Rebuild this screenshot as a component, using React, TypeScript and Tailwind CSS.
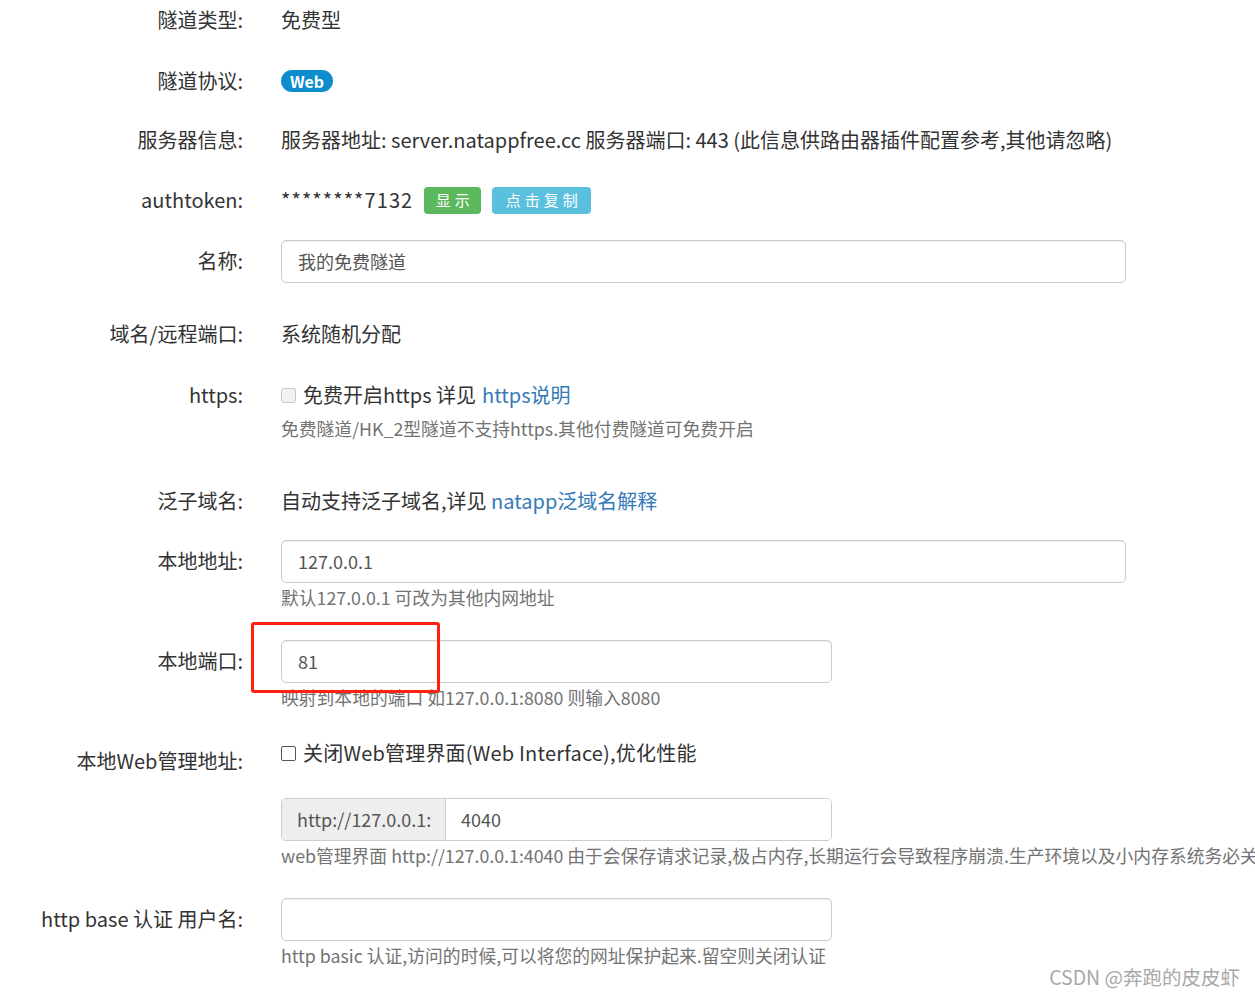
import React from "react";

const FONT = { fontFamily: '"Noto Sans CJK SC", "Noto Sans", sans-serif' };

function Label({ children, pt = "" }: { children: React.ReactNode; pt?: string }) {
  return (
    <div className={`w-[243px] shrink-0 text-right text-[20px] leading-[42px] text-[#333] ${pt}`}>
      {children}
    </div>
  );
}

function Help({ children }: { children: React.ReactNode }) {
  return <div className="text-[17.8px] leading-[28px] text-[#737373] whitespace-nowrap">{children}</div>;
}

function Input({ value, wide = true }: { value?: string; wide?: boolean }) {
  return (
    <div
      className={`${wide ? "w-[845px]" : "w-[551px]"} h-[43px] border border-[#ccc] rounded-[5px] bg-white shadow-[inset_0_1px_1px_rgba(0,0,0,0.075)] flex items-center pl-[16px] text-[18px] text-[#555]`}
    >
      {value}
    </div>
  );
}

export default function App() {
  return (
    <div style={FONT} className="relative w-[1255px] h-[996px] overflow-hidden bg-white text-[#333]">
      <div className="flex flex-col">
        {/* 隧道类型 */}
        <div className="flex h-[61px] -mt-[1px]">
          <Label>隧道类型:</Label>
          <div className="ml-[38px] text-[20px] leading-[42px]">免费型</div>
        </div>
        {/* 隧道协议 */}
        <div className="flex h-[59px]">
          <Label>隧道协议:</Label>
          <div className="ml-[38px] h-[42px] flex items-center">
            <span className="inline-flex items-center justify-center h-[22px] w-[52px] rounded-full bg-[#0e8dcc] text-white font-bold text-[16px] leading-none">
              Web
            </span>
          </div>
        </div>
        {/* 服务器信息 */}
        <div className="flex h-[60px]">
          <Label>服务器信息:</Label>
          <div className="ml-[38px] text-[20px] leading-[42px] whitespace-nowrap">
            服务器地址: server.natappfree.cc 服务器端口: 443 (此信息供路由器插件配置参考,其他请忽略)
          </div>
        </div>
        {/* authtoken */}
        <div className="flex h-[61px]">
          <Label>authtoken:</Label>
          <div className="ml-[38px] h-[42px] flex items-center">
            <span className="text-[20px] tracking-[1.1px]">********7132</span>
            <span className="ml-[11px] inline-flex items-center justify-center h-[27px] w-[57px] rounded-[4px] bg-[#5cb85c] text-white text-[15px] tracking-[4px] pl-[4px]">
              显示
            </span>
            <span className="ml-[11px] inline-flex items-center justify-center h-[27px] w-[99px] rounded-[4px] bg-[#5bc0de] text-white text-[15px] tracking-[4px] pl-[4px]">
              点击复制
            </span>
          </div>
        </div>
        {/* 名称 */}
        <div className="flex h-[73px]">
          <Label>名称:</Label>
          <div className="ml-[38px]">
            <Input value="我的免费隧道" />
          </div>
        </div>
        {/* 域名/远程端口 */}
        <div className="flex h-[61px]">
          <Label>域名/远程端口:</Label>
          <div className="ml-[38px] text-[20px] leading-[42px]">系统随机分配</div>
        </div>
        {/* https */}
        <div className="flex h-[106px]">
          <Label>https:</Label>
          <div className="ml-[38px]">
            <div className="h-[42px] flex items-center text-[20px]">
              <span className="inline-block w-[15px] h-[15px] rounded-[3px] border border-[#c8c8c8] bg-[#f2f2f2] mr-[7px]" />
              <span>免费开启https 详见 </span>
              <span className="text-[#337ab7] ml-[6px]">https说明</span>
            </div>
            <div className="-mt-[2px]">
              <Help>免费隧道/HK_2型隧道不支持https.其他付费隧道可免费开启</Help>
            </div>
          </div>
        </div>
        {/* 泛子域名 */}
        <div className="flex h-[60px]">
          <Label>泛子域名:</Label>
          <div className="ml-[38px] text-[20px] leading-[42px]">
            自动支持泛子域名,详见 <span className="text-[#337ab7]">natapp泛域名解释</span>
          </div>
        </div>
        {/* 本地地址 */}
        <div className="flex h-[100px]">
          <Label>本地地址:</Label>
          <div className="ml-[38px]">
            <Input value="127.0.0.1" />
            <Help>默认127.0.0.1 可改为其他内网地址</Help>
          </div>
        </div>
        {/* 本地端口 */}
        <div className="flex h-[92px]">
          <Label>本地端口:</Label>
          <div className="ml-[38px]">
            <Input value="81" wide={false} />
            <Help>映射到本地的端口 如127.0.0.1:8080 则输入8080</Help>
          </div>
        </div>
        {/* 本地Web管理地址 */}
        <div className="flex h-[166px]">
          <Label pt="pt-[8px]">本地Web管理地址:</Label>
          <div className="ml-[38px]">
            <div className="h-[42px] flex items-center text-[20px] whitespace-nowrap tracking-[0.2px]">
              <span className="inline-block w-[15px] h-[15px] rounded-[2px] border border-[#555] bg-white mr-[7px]" />
              关闭Web管理界面(Web Interface),优化性能
            </div>
            <div className="mt-[24px] flex w-[551px] h-[43px] border border-[#ccc] rounded-[5px] overflow-hidden text-[18px] text-[#555]">
              <div className="w-[164px] shrink-0 bg-[#eeeeee] border-r border-[#ccc] flex items-center pl-[15px]">
                http://127.0.0.1:
              </div>
              <div className="flex-1 bg-white flex items-center pl-[15px]">4040</div>
            </div>
            <Help>
              web管理界面 http://127.0.0.1:4040 由于会保存请求记录,极占内存,长期运行会导致程序崩溃.生产环境以及小内存系统务必关闭
            </Help>
          </div>
        </div>
        {/* http base */}
        <div className="flex">
          <Label>http base 认证 用户名:</Label>
          <div className="ml-[38px]">
            <Input wide={false} />
            <Help>http basic 认证,访问的时候,可以将您的网址保护起来.留空则关闭认证</Help>
          </div>
        </div>
      </div>

      {/* red annotation box */}
      <div className="absolute left-[251px] top-[622px] w-[189px] h-[71px] border-[3px] border-[#ff2010] rounded-[3px]" />

      {/* watermark */}
      <div className="absolute right-[15px] top-[963px] text-[19.5px] leading-[28px] text-[#a8a8a8]">
        CSDN @奔跑的皮皮虾
      </div>
    </div>
  );
}
